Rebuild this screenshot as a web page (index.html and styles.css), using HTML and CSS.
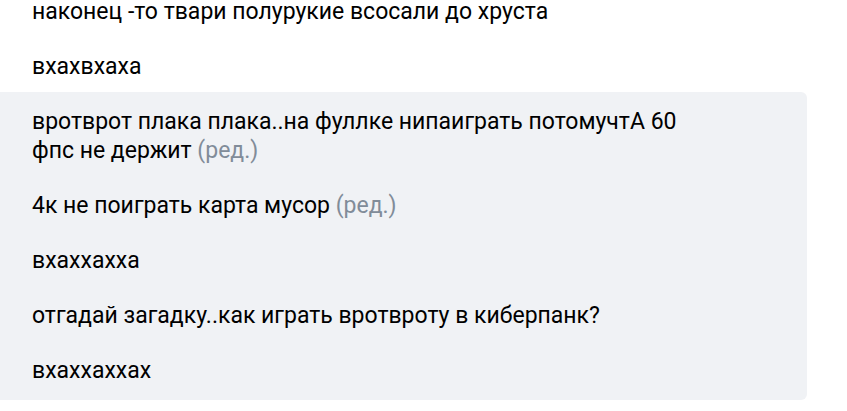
FILE: index.html
```html
<!DOCTYPE html>
<html lang="ru">
<head>
<meta charset="utf-8">
<link rel="stylesheet" href="styles.css">
</head>
<body>
<div class="history">
  <div class="msg">наконец -то твари полурукие всосали до хруста</div>
  <div class="msg">вхахвхаха</div>
  <div class="group">
    <div class="msg">вротврот плака плака..на фуллке нипаиграть потомучтА 60 фпс не держит <span class="edited">(ред.)</span></div>
    <div class="msg">4к не поиграть карта мусор <span class="edited">(ред.)</span></div>
    <div class="msg">вхаххахха</div>
    <div class="msg">отгадай загадку..как играть вротвроту в киберпанк?</div>
    <div class="msg">вхаххаххах</div>
  </div>
</div>
</body>
</html>
```
FILE: styles.css
```css
html, body {
  margin: 0;
  padding: 0;
  background: #ffffff;
}
body {
  font-family: Roboto, "Noto Sans", sans-serif;
  font-size: 23px;
  color: #000000;
  overflow: hidden;
}
.history {
  width: 807px;
  margin-top: -18px;
}
.msg {
  padding: 15px 115px 11px 32px;
  line-height: 29px;
}
.group {
  background: #f0f2f5;
  border-radius: 0 6px 6px 0;
  padding-bottom: 4px;
}
.edited {
  color: #818c99;
}
```
